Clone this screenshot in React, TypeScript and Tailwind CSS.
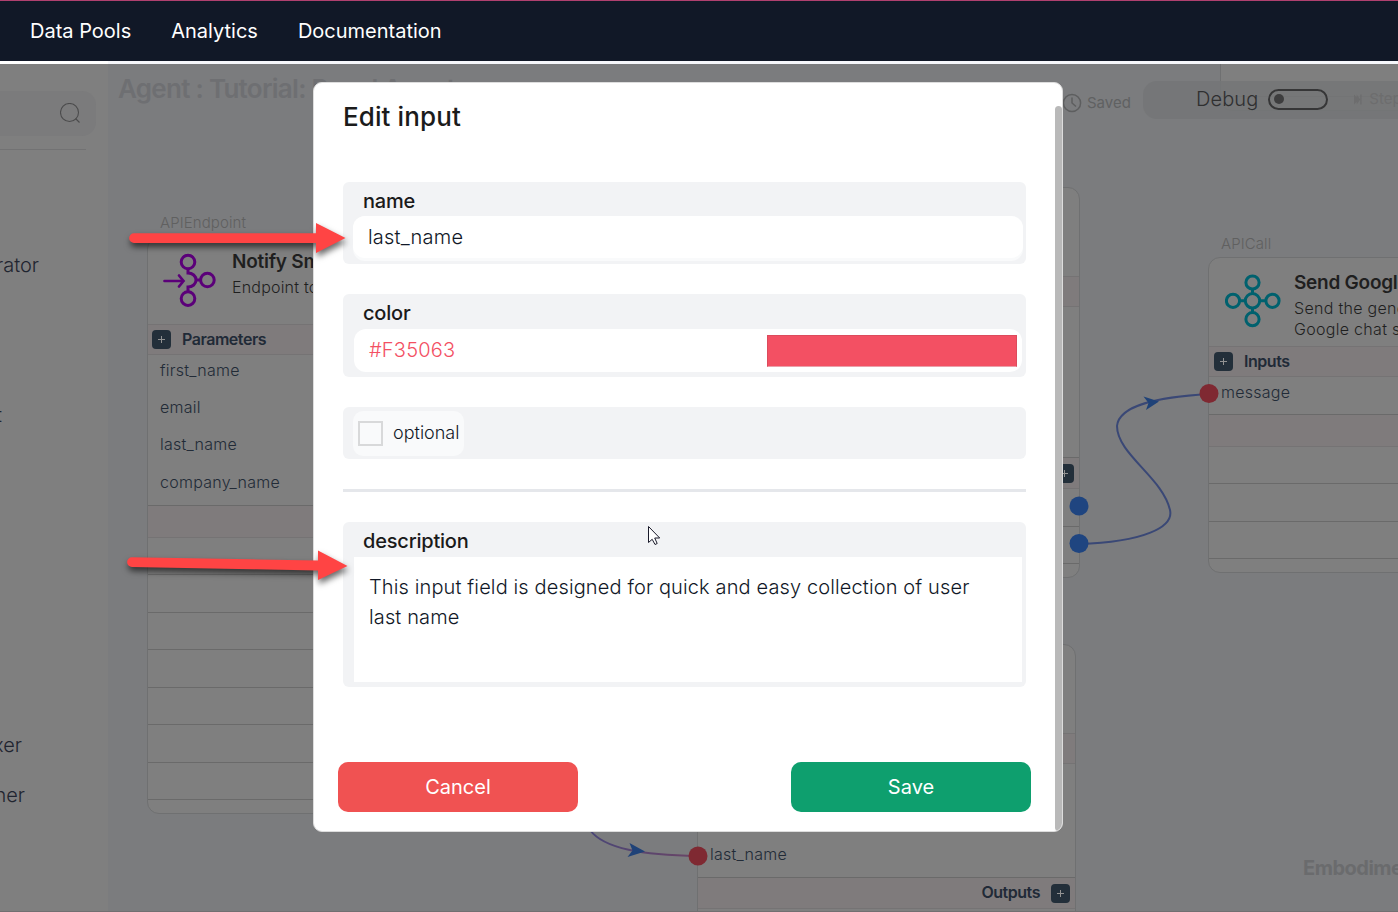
import React from "react";

type Section = { h: number; tone?: "band" | "plain"; line?: "soft" | "strong"; body?: React.ReactNode };

function Rows({ sections }: { sections: Section[] }) {
  return (
    <>
      {sections.map((s, i) => (
        <div
          key={i}
          style={{ height: s.h }}
          className={`flex shrink-0 items-center ${s.tone === "band" ? "bg-[#7f7b7c]" : ""} ${
            s.line === "strong" ? "border-t border-[#6a6a6a]" : s.line === "soft" ? "border-t border-[#757374]" : ""
          }`}
        >
          {s.body}
        </div>
      ))}
    </>
  );
}

function Plus() {
  return (
    <span className="flex h-[19px] w-[19px] shrink-0 items-center justify-center rounded-[4px] bg-[#232f3a]">
      <svg width="7" height="7" viewBox="0 0 7 7" stroke="#929292" strokeWidth="1">
        <path d="M3.5 0v7M0 3.5h7" />
      </svg>
    </span>
  );
}

function Heading({ children }: { children: string }) {
  return <b className="pb-[2px] text-base font-semibold tracking-[-0.46px] text-[#212a37]">{children}</b>;
}

const band: Section = { h: 32, tone: "band", line: "strong" };
const row = (h: number): Section => ({ h, line: "strong" });

function Param({ children }: { children: React.ReactNode }) {
  return <span className="pl-3 text-base font-light tracking-[0.26px] text-[#222b37]">{children}</span>;
}

function EndpointIcon() {
  return (
    <svg width="54" height="54" viewBox="0 0 54 54" fill="none" stroke="#5b0079" strokeWidth="3">
      <circle cx="26" cy="9" r="6.8" />
      <circle cx="45.4" cy="27" r="6.8" />
      <circle cx="26" cy="45.6" r="6.8" />
      <path d="M26 16v4c4.500 0 8 3 8 7s-3.500 7-8 7v5M34 27h5" />
      <path d="M2.500 28h19M17 22.500l4.500 5.500-4.500 5.500" strokeLinecap="round" strokeWidth="2.700" />
    </svg>
  );
}

function CallIcon() {
  return (
    <svg width="56" height="54" viewBox="0 0 56 54" fill="none" stroke="#00616e" strokeWidth="3">
      <circle cx="27.500" cy="8.500" r="6.600" />
      <circle cx="27.500" cy="26.800" r="7.200" />
      <circle cx="27.500" cy="45.200" r="6.600" />
      <circle cx="8" cy="26.800" r="6.600" />
      <circle cx="47.500" cy="26.800" r="6.600" />
      <path d="M27.500 15v5M27.500 34v5M14.500 26.800h6M34.500 26.800h6" />
    </svg>
  );
}

function Canvas() {
  return (
    <main className="relative flex-1 overflow-hidden bg-[#7b7c7e]">
      <h1 className="absolute left-[10px] top-[9px] whitespace-nowrap text-[26px] leading-8 font-semibold tracking-[-0.72px] text-[#6e6f72]">
        Agent : Tutorial: Panel Agent
      </h1>

      {/* Node: API endpoint */}
      <span className="absolute left-[52px] top-[149px] text-[15px] leading-5 font-light tracking-[0.1px] text-[#606060]">APIEndpoint</span>
      <section className="absolute left-[39px] top-[173px] flex h-[577px] w-[320px] flex-col overflow-hidden rounded-[12px] border border-[#6f7071] bg-[#7f7f7f]">
        <div className="flex h-[86px] gap-[16px] pl-[14px] pt-[15px]">
          <EndpointIcon />
          <div className="-mt-[2px]">
            <div className="whitespace-nowrap text-[19px] leading-[22px] font-semibold tracking-[-0.25px] text-[#1f1f1f]">Notify Smyth</div>
            <div className="whitespace-nowrap pt-[3px] text-base leading-[22px] font-light tracking-[0.2px] text-[#1f1f1f]">Endpoint to notify</div>
          </div>
        </div>
        <Rows
          sections={[
            {
              h: 30,
              tone: "band",
              line: "soft",
              body: (
                <div className="flex items-center gap-[11px] pl-1">
                  <Plus />
                  <Heading>Parameters</Heading>
                </div>
              ),
            },
            { h: 30, line: "soft", body: <Param>first_name</Param> },
            { h: 46, body: <Param>email</Param> },
            { h: 28, body: <Param>last_name</Param> },
            { h: 47, body: <Param>company_name</Param> },
            band,
            { h: 37, line: "soft" },
            row(38), row(37), row(38), row(37), row(38), row(37), row(14),
          ]}
        />
      </section>

      {/* Node: partly visible, upper */}
      <section className="absolute left-[590px] top-[123px] flex h-[391px] w-[382px] flex-col overflow-hidden rounded-[12px] border border-[#6f7071] bg-[#7f7f7f]">
        <Rows
          sections={[
            { h: 88 },
            { h: 30, tone: "band", line: "soft" },
            { h: 151, line: "soft" },
            { h: 31, tone: "band", line: "strong", body: <div className="flex flex-1 justify-end pr-[5px]"><Plus /></div> },
            { h: 38, line: "soft" },
            row(37), row(14),
          ]}
        />
      </section>

      {/* Node: partly visible, lower */}
      <section className="absolute left-[589px] top-[580px] flex h-[300px] w-[379px] flex-col overflow-hidden rounded-[12px] border border-[#6f7071] bg-[#7f7f7f]">
        <Rows
          sections={[
            { h: 88 },
            { h: 30, tone: "band", line: "soft" },
            { h: 68, line: "soft" },
            { h: 46, body: <Param>last_name</Param> },
            {
              h: 31,
              tone: "band",
              line: "strong",
              body: (
                <div className="flex flex-1 items-center justify-end gap-[11px] pr-[5px]">
                  <Heading>Outputs</Heading>
                  <Plus />
                </div>
              ),
            },
            { h: 30, line: "soft" },
          ]}
        />
      </section>

      {/* Node: API call */}
      <span className="absolute left-[1113px] top-[170px] text-[15px] leading-5 font-light tracking-[0.1px] text-[#606060]">APICall</span>
      <section className="absolute left-[1100px] top-[193px] flex h-[316px] w-[320px] flex-col overflow-hidden rounded-[12px] border border-[#6f7071] bg-[#7f7f7f]">
        <div className="flex h-[88px] gap-[13px] pl-[16px] pt-[16px]">
          <CallIcon />
          <div>
            <div className="whitespace-nowrap text-[19px] leading-[18px] font-semibold tracking-[-0.25px] text-[#1f1f1f]">Send Google Chat</div>
            <div className="whitespace-nowrap pt-[6px] text-base leading-[21px] font-light tracking-[0.3px] text-[#1f1f1f]">
              Send the generated
              <br />
              Google chat space
            </div>
          </div>
        </div>
        <Rows
          sections={[
            {
              h: 30,
              tone: "band",
              line: "soft",
              body: (
                <div className="flex items-center gap-[11px] pl-[5px]">
                  <Plus />
                  <Heading>Inputs</Heading>
                </div>
              ),
            },
            { h: 38, line: "soft", body: <div className="pb-[7px]"><Param>message</Param></div> },
            band,
            { h: 37, line: "soft" },
            row(38), row(37), row(14),
          ]}
        />
      </section>

      {/* Node: top right */}
      <section className="absolute left-[1112px] top-[-60px] flex h-[107px] w-[320px] flex-col justify-end overflow-hidden rounded-[12px] border border-[#6f7071] bg-[#7f7f7f]">
        <Rows sections={[row(14)]} />
      </section>

      <svg className="absolute left-0 top-0" width="1290" height="848" fill="none">
        <defs>
          <linearGradient id="wire" x1="0" x2="1">
            <stop offset="0" stopColor="#4a4676" />
            <stop offset="1" stopColor="#6b4566" />
          </linearGradient>
        </defs>
        <path d="M971 480C1036 478 1066 463 1062 446C1055 414 1009 390 1009 362C1011 341 1050 333 1101 330" stroke="#3a4876" strokeWidth="2" />
        <path d="M482 766C496 785 535 791 590 792" stroke="url(#wire)" strokeWidth="2" />
        <path d="M1035.500 332.500L1051 337.500L1038 346L1040.500 339Z M521.500 779L537 787.500L519.500 793L524.500 786.500Z" fill="#1f4278" />
        <circle cx="971" cy="442" r="9.500" fill="#1f4580" />
        <circle cx="971" cy="479.500" r="9.500" fill="#1f4580" />
        <circle cx="1101" cy="329.500" r="9.500" fill="#7f2932" />
        <circle cx="590" cy="792" r="9.500" fill="#7f2932" />
      </svg>

      {/* Status and debug toolbar */}
      <div className="absolute left-[954px] top-[29px] flex h-5 items-center gap-[5px] text-[#606162]">
        <svg width="20" height="20" viewBox="0 0 20 20" fill="none" stroke="#5d5e5f" strokeWidth="1.500">
          <circle cx="10" cy="10" r="8.600" />
          <path d="M10 4.500V10l4 3.500" />
        </svg>
        <span className="pt-px text-[15px]">Saved</span>
      </div>
      <div className="absolute left-[1035px] top-[17px] flex h-[38px] w-[330px] items-center rounded-[14px] bg-[#747577]/85 pb-[2px] pl-[53px]">
        <span className="text-[20px] font-light tracking-[0.1px] text-[#2f2f30]">Debug</span>
        <span className="ml-[10px] flex h-[21px] w-[60px] items-center rounded-full border-2 border-[#363637] pl-1">
          <span className="h-[10px] w-[10px] rounded-full bg-[#3d3d3e]" />
        </span>
        <svg className="ml-[26px]" width="8" height="11" viewBox="0 0 9 11" fill="#6d6d6e">
          <path d="M0 0l3 3V0l4 5.500L3 11V8l-3 3zM7 0h1.500v11H7z" />
        </svg>
        <span className="ml-[7px] pt-px text-[15px] text-[#6d6d6e]">Step</span>
      </div>

      <span className="absolute left-[1195px] top-[791px] whitespace-nowrap text-[20px] leading-[26px] font-bold tracking-[-0.5px] text-[#6a6b6d]">
        Embodiment
      </span>
    </main>
  );
}

function SideLabel({ children, box }: { children: string; box: string }) {
  return <div className={`flex h-[50px] items-center justify-end overflow-hidden text-[20px] font-light text-[#1f2530] ${box}`}>{children}</div>;
}

function Sidebar() {
  return (
    <aside className="flex w-[108px] flex-col bg-[#7f7f7f] pt-[27px]">
      <div className="flex h-[45px] w-[96px] items-center justify-end rounded-r-[14px] bg-[#7b7b7c] pr-[16px] pb-[2px]">
        <svg width="20" height="20" viewBox="0 0 20 20" fill="none" stroke="#4b4b4c" strokeWidth="1.100">
          <circle cx="9.500" cy="9.500" r="9" />
          <path d="M15.500 15.500l4 4" />
        </svg>
      </div>
      <div className="mt-[13px] h-px w-[86px] bg-[#727273]" />
      <div className="flex flex-col pt-[90px]">
        <SideLabel box="w-[39px]">rator</SideLabel>
        <div className="h-[100px]" />
        <SideLabel box="w-[2px]">t</SideLabel>
        <div className="h-[280px]" />
        <SideLabel box="w-[22px]">xer</SideLabel>
        <SideLabel box="w-[25px]">ner</SideLabel>
      </div>
    </aside>
  );
}

function Dialog() {
  return (
    <div className="absolute left-[313px] top-[82px] flex h-[750px] w-[750px] justify-between overflow-hidden rounded-[9px] border border-[#dddddd] bg-white">
      <div className="flex w-[718px] flex-col pl-[29px]">
        <h2 className="mt-[16px] text-[26px] leading-[36px] font-medium tracking-[0.1px] text-[#1b1b1b]">Edit input</h2>

        <div className="mt-[47px] h-[82px] w-[683px] rounded-[6px] bg-[#f2f3f5] px-[10px]">
          <div className="h-[34px] pl-[10px] pt-[5px] text-[20px] leading-[28px] font-medium tracking-[-0.25px] text-[#1a1a1a]">name</div>
          <div className="h-[45px] w-[670px] rounded-[12px] bg-[#f9fafb]">
            <div className="flex h-[42px] items-center rounded-[12px] bg-white pl-[15px] text-[20px] font-light tracking-[0.2px] text-[#111827]">last_name</div>
          </div>
        </div>

        <div className="mt-[30px] h-[83px] w-[683px] rounded-[6px] bg-[#f2f3f5] pl-[11px]">
          <div className="h-[35px] pl-[9px] pt-[5px] text-[20px] leading-[28px] font-medium tracking-[-0.2px] text-[#1a1a1a]">color</div>
          <div className="flex h-[43px] w-[668px] items-center justify-between rounded-[12px] bg-white pl-[15px] pr-[5px] text-[20px] font-light tracking-[0.2px] text-[#f35063]">
            <span className="pb-[2px]">#F35063</span>
            <div className="h-[32px] w-[250px] border border-b-dashed border-[#dc4b5c] border-b-[#eaa0aa] bg-[#f35063]" />
          </div>
        </div>

        <div className="mt-[30px] flex h-[52px] w-[683px] rounded-[6px] bg-[#f2f3f5] pl-[10px] pt-[4px]">
          <label className="flex h-[45px] w-[111px] items-center rounded-[10px] bg-[#f9fafb] pl-[5px]">
            <span className="h-[25px] w-[25px] border-2 border-[#d8d9da]" />
            <span className="pb-[2px] pl-[10px] text-[18px] font-light text-[#111827]">optional</span>
          </label>
        </div>

        <div className="mt-[30px] h-[3px] w-[683px] bg-[#e5e7eb]" />

        <div className="mt-[30px] h-[165px] w-[683px] rounded-[6px] bg-[#f2f3f5] pl-[11px]">
          <div className="h-[35px] pl-[9px] pt-[5px] text-[20px] leading-[28px] font-medium tracking-[-0.2px] text-[#1a1a1a]">description</div>
          <div className="h-[125px] w-[668px] bg-white pl-[15px] pt-[15px] text-[20px] leading-[30px] font-light tracking-[0.125px] text-[#111827]">
            This input field is designed for quick and easy collection of user
            <br />
            last name
          </div>
        </div>

        <div className="-ml-[5px] mt-[75px] flex w-[693px] justify-between text-[20px] text-white">
          <button className="h-[50px] w-[240px] rounded-[10px] bg-[#f05252]">Cancel</button>
          <button className="h-[50px] w-[240px] rounded-[10px] bg-[#0e9f6e]">Save</button>
        </div>
      </div>
      <div className="mt-[23px] w-[7px] rounded-full bg-[#b9b9b9]" />
    </div>
  );
}

function Annotations() {
  return (
    <svg className="pointer-events-none absolute left-0 top-0" width="1398" height="912" fill="none">
      <g className="drop-shadow-[1px_4px_3px_rgba(0,0,0,0.6)]" fill="#ff4444">
        <path d="M134 233.300H316V223L345.500 238L316 253V243H134A4.800 4.800 0 0 1 134 233.300Z" />
        <path d="M132 557.200L318 560.500V550.500L347.500 566L318 580V570.500L132 567A4.900 4.900 0 0 1 132 557.200Z" />
      </g>
      <path d="M648.500 526.500v16l3.700-3.200 2.800 5.200 2.200-1-2.500-5.500h5z" fill="white" stroke="#1a1a2a" strokeWidth="1" />
    </svg>
  );
}

export default function App() {
  return (
    <div className="relative flex h-[912px] w-[1398px] flex-col overflow-hidden bg-white font-['Inter',sans-serif]">
      <header className="flex h-[61px] shrink-0 items-center gap-10 border-t border-[#b0406f] bg-[#111827] pl-[30px] text-[20px] text-white">
        <span>Data Pools</span>
        <span>Analytics</span>
        <span>Documentation</span>
      </header>
      <div className="flex h-[3px] shrink-0">
        <div className="w-[108px] bg-white" />
        <div className="flex-1 bg-[#f6f7fb]" />
      </div>
      <div className="flex min-h-0 flex-1 border-b border-[#716f71]">
        <Sidebar />
        <Canvas />
      </div>
      <Dialog />
      <Annotations />
    </div>
  );
}
